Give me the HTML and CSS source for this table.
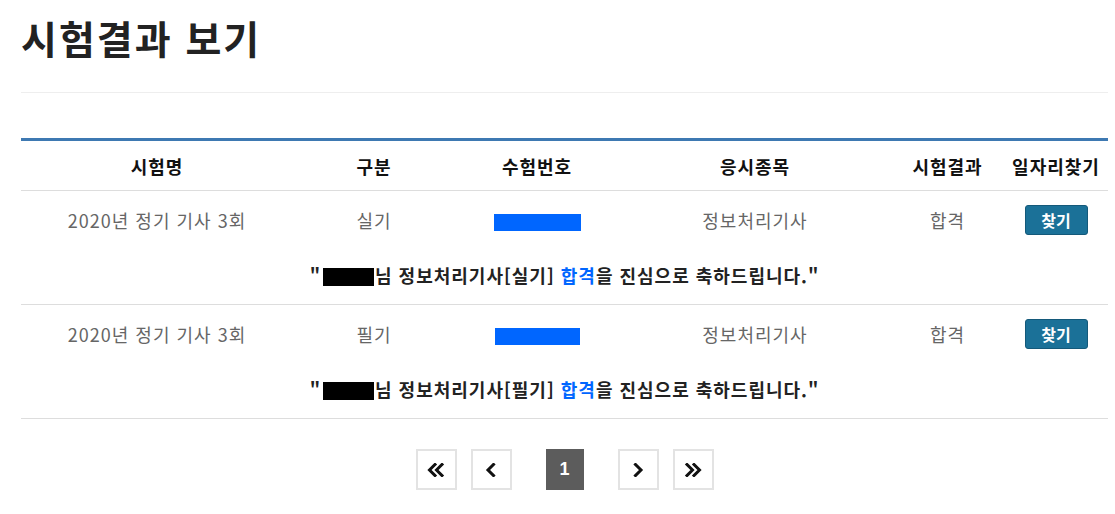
FILE: index.html
```html
<!DOCTYPE html>
<html lang="ko">
	<head>
		<meta charset="UTF-8" />
		<meta name="viewport" content="width=device-width, initial-scale=1.0" />
		<title>시험결과 보기</title>
		<link rel="stylesheet" href="styles.css">
	</head>
	<body>
		<div class="wrap">
			<h1 class="pageTitle">시험결과 보기</h1>

			<table class="resultTable">
				<thead>
					<tr>
						<th class="colName">시험명</th>
						<th class="colType">구분</th>
						<th class="colNo">수험번호</th>
						<th class="colSubject">응시종목</th>
						<th class="colResult">시험결과</th>
						<th class="colJob">일자리찾기</th>
					</tr>
				</thead>
				<tbody>
					<tr class="dataRow">
						<td>2020년 정기 기사 3회</td>
						<td>실기</td>
						<td><span class="mask blue" style="width: 87px;"></span></td>
						<td>정보처리기사</td>
						<td>합격</td>
						<td><button class="findBtn">찾기</button></td>
					</tr>
					<tr class="msgRow">
						<td colspan="6">"<span class="mask black"></span>님 정보처리기사[실기] <span class="pass">합격</span>을 진심으로 축하드립니다."</td>
					</tr>
					<tr class="dataRow">
						<td>2020년 정기 기사 3회</td>
						<td>필기</td>
						<td><span class="mask blue" style="width: 85px;"></span></td>
						<td>정보처리기사</td>
						<td>합격</td>
						<td><button class="findBtn">찾기</button></td>
					</tr>
					<tr class="msgRow">
						<td colspan="6">"<span class="mask black"></span>님 정보처리기사[필기] <span class="pass">합격</span>을 진심으로 축하드립니다."</td>
					</tr>
				</tbody>
			</table>

			<nav class="paging">
				<a class="pageBtn" href="#">
					<svg width="20" height="14" viewBox="0 0 20 14"><polyline points="9,1.5 3.5,7 9,12.5" /><polyline points="16,1.5 10.5,7 16,12.5" /></svg>
				</a>
				<a class="pageBtn" href="#">
					<svg width="12" height="14" viewBox="0 0 12 14"><polyline points="8.5,1.5 3,7 8.5,12.5" /></svg>
				</a>
				<span class="pageNum">1</span>
				<a class="pageBtn" href="#">
					<svg width="12" height="14" viewBox="0 0 12 14"><polyline points="3.5,1.5 9,7 3.5,12.5" /></svg>
				</a>
				<a class="pageBtn" href="#">
					<svg width="20" height="14" viewBox="0 0 20 14"><polyline points="4,1.5 9.5,7 4,12.5" /><polyline points="11,1.5 16.5,7 11,12.5" /></svg>
				</a>
			</nav>
		</div>
	</body>
</html>
```

FILE: styles.css
```css
* {
	box-sizing: border-box;
	margin: 0;
	padding: 0;
	font-family: "Noto Sans CJK KR", "Noto Sans", sans-serif;
}

body {
	background: #fff;
	color: #222;
}

.wrap {
	width: 1087px;
	margin-left: 21px;
}

.pageTitle {
	font-size: 39px;
	font-weight: 700;
	line-height: 46px;
	letter-spacing: 2px;
	color: #222;
	padding-top: 14px;
	padding-bottom: 32px;
	border-bottom: 1px solid #eee;
	margin-bottom: 45px;
}

.resultTable {
	width: 100%;
	border-collapse: collapse;
	table-layout: fixed;
	border-top: 3px solid #3e79b2;
}

.resultTable th,
.resultTable td {
	text-align: center;
	white-space: nowrap;
	padding: 0;
	font-size: 18px;
	letter-spacing: 1px;
}

.resultTable th {
	height: 51px;
	font-weight: 700;
	color: #111;
	border-bottom: 1px solid #ddd;
}

.colName { width: 272px; }
.colType { width: 162px; }
.colNo { width: 164px; }
.colSubject { width: 272px; }
.colResult { width: 113px; }
.colJob { width: 104px; }

.dataRow td {
	height: 58px;
	color: #666;
	vertical-align: middle;
}

.msgRow td {
	height: 56px;
	font-weight: 700;
	color: #222;
	padding-bottom: 3px;
	border-bottom: 1px solid #ddd;
}

.mask {
	display: inline-block;
	vertical-align: middle;
}

.mask.blue {
	height: 17px;
	background: #0066ff;
}

.mask.black {
	width: 51px;
	height: 18px;
	background: #000;
	margin: 0 1px 0 2px;
	position: relative;
	top: -1px;
}

.pass {
	color: #0066ff;
}

.findBtn {
	width: 63px;
	height: 30px;
	background: #1b7198;
	border: 1px solid #14597a;
	border-radius: 3px;
	color: #fff;
	font-size: 16px;
	font-weight: 700;
	letter-spacing: 0;
	line-height: 26px;
	cursor: pointer;
}

.paging {
	display: flex;
	justify-content: center;
	align-items: center;
	gap: 14px;
	margin-top: 30px;
}

.pageBtn {
	width: 41px;
	height: 41px;
	border: 2px solid #e3e3e3;
	display: flex;
	align-items: center;
	justify-content: center;
	background: #fff;
}

.pageBtn svg polyline {
	fill: none;
	stroke: #111;
	stroke-width: 3;
	stroke-linecap: square;
	stroke-linejoin: miter;
}

.pageNum {
	width: 38px;
	height: 41px;
	margin: 0 20px;
	background: #5c5c5c;
	color: #fff;
	font-family: "Liberation Sans", sans-serif;
	font-size: 18px;
	font-weight: 700;
	display: flex;
	align-items: center;
	justify-content: center;
}
```
